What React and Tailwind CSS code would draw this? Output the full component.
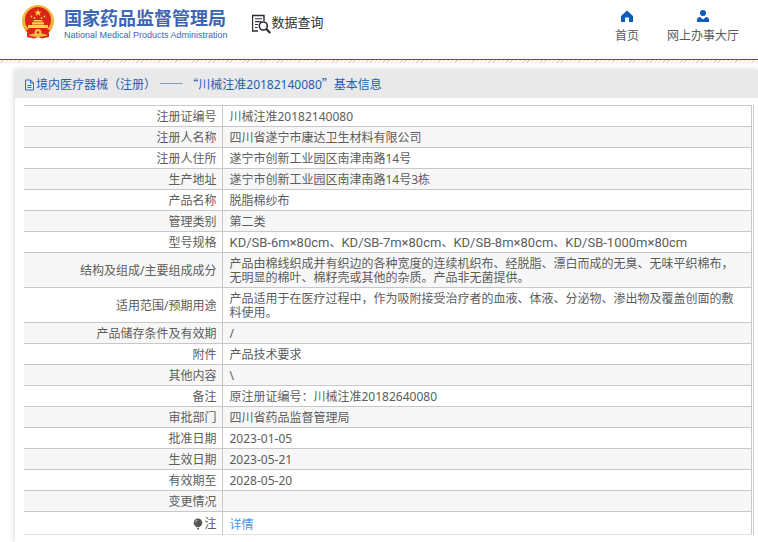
const rows = [
    { label: '注册证编号', value: '川械注准20182140080' },
    { label: '注册人名称', value: '四川省遂宁市康达卫生材料有限公司' },
    { label: '注册人住所', value: '遂宁市创新工业园区南津南路14号' },
    { label: '生产地址', value: '遂宁市创新工业园区南津南路14号3栋' },
    { label: '产品名称', value: '脱脂棉纱布' },
    { label: '管理类别', value: '第二类' },
    { label: '型号规格', value: <ModelList models={['KD/SB-6m×80cm', 'KD/SB-7m×80cm', 'KD/SB-8m×80cm', 'KD/SB-1000m×80cm']} /> },
    {
        label: '结构及组成/主要组成成分',
        value: '产品由棉线织成并有织边的各种宽度的连续机织布、经脱脂、漂白而成的无臭、无味平织棉布，无明显的棉叶、棉籽壳或其他的杂质。产品非无菌提供。'
    },
    {
        label: '适用范围/预期用途',
        value: '产品适用于在医疗过程中，作为吸附接受治疗者的血液、体液、分泌物、渗出物及覆盖创面的敷料使用。'
    },
    { label: '产品储存条件及有效期', value: '/' },
    { label: '附件', value: '产品技术要求' },
    { label: '其他内容', value: '\\' },
    { label: '备注', value: '原注册证编号：川械注准20182640080' },
    { label: '审批部门', value: '四川省药品监督管理局' },
    { label: '批准日期', value: '2023-01-05' },
    { label: '生效日期', value: '2023-05-21' },
    { label: '有效期至', value: '2028-05-20' },
    { label: '变更情况', value: '' }
];

export default function App() {
    return (
        <div lang="zh-CN" className="min-h-screen bg-white font-['Noto_Sans','Noto_Sans_CJK_SC',sans-serif] text-xs text-[#5c5c5c]">
            <Header />
            <main className="mt-[7px] ml-[15px] shadow-[0_0_6px_rgba(0,0,0,0.2)]">
                <h1 className="flex h-7 items-center gap-px bg-[#e9e9e9] pt-px pl-[9px] text-xs text-[#1c5fb4]">
                    <DocumentIcon />
                    <span>
                        境内医疗器械（注册） <Cjk>——</Cjk> <Cjk>“</Cjk>川械注准20182140080<Cjk>”</Cjk>基本信息
                    </span>
                </h1>
                <div className="pt-[7px] pr-1 pb-2 pl-[9px]">
                    <div className="border-r border-[#ccccd4] pr-px">
                        <DetailTable />
                    </div>
                </div>
            </main>
        </div>
    );
}

function Header() {
    return (
        <header>
            <div className="flex h-[60px] items-start border-b border-[#1f5fa8] pr-[19px] pl-[21px]">
                <a href="#" className="flex items-start gap-[9px] pt-1">
                    <Emblem />
                    <span className="flex flex-col pt-0.5 font-['Noto_Sans_CJK_SC',sans-serif] text-lg leading-[22px] font-bold whitespace-nowrap text-[#3c66b4]">
                        国家药品监督管理局
                        <span className="font-['Liberation_Sans',sans-serif] text-[9px] leading-[14px] font-normal">
                            National Medical Products Administration
                        </span>
                    </span>
                </a>
                <a href="#" className="ml-6 flex items-center pt-2.5 text-[13px] leading-6 whitespace-nowrap text-[#333]">
                    <SearchDocIcon />
                    数据查询
                </a>
                <nav className="ml-auto flex gap-7 pt-2.5 whitespace-nowrap">
                    <a href="#" className="flex flex-col items-center gap-1.5">
                        <HomeIcon />
                        <span>首页</span>
                    </a>
                    <a href="#" className="flex flex-col items-center gap-1.5">
                        <PersonIcon />
                        <span>网上办事大厅</span>
                    </a>
                </nav>
            </div>
            <div className="h-[3px] bg-[repeating-linear-gradient(135deg,#fff_0px,#fff_2px,#d5dbe2_2px,#d5dbe2_3px)]" />
        </header>
    );
}

function DetailTable() {
    return (
        <table className="w-full table-fixed border-collapse border-t border-r border-[#c8c8cc] leading-[14px]">
            <colgroup>
                <col className="w-[198px]" />
                <col />
            </colgroup>
            <tbody>
                {rows.map(({ label, value }) => (
                    <tr key={label} className="h-[21px] border-b border-[#c8c8cc] even:bg-[#f7f7f7]">
                        <th scope="row" className="border-r border-[#c8c8cc] pt-1 pr-[5px] pb-0.5 text-right font-normal">
                            {label}
                        </th>
                        <td className="pt-1 pr-2 pb-0.5 pl-[7px]">{value}</td>
                    </tr>
                ))}
                <tr className="h-[23px] border-b border-[#e4e4e4]">
                    <th scope="row" className="border-r border-[#c8c8cc] pt-0.5 pr-[5px] font-normal">
                        <span className="flex items-center justify-end gap-px">
                            <BulbIcon />注
                        </span>
                    </th>
                    <td className="pt-1 pr-2 pl-[7px]">
                        <a href="#" className="text-[#4a94e6]">详情</a>
                    </td>
                </tr>
            </tbody>
        </table>
    );
}

function ModelList({ models }) {
    return models.map((model, i) => (
        <span key={model}>
            {i > 0 && '、'}
            <span className="font-['Roboto',sans-serif] text-[13px] leading-[14px]">{model}</span>
        </span>
    ));
}

// Full-width punctuation has to come from the Chinese font
function Cjk({ children }) {
    return <span className="font-['Noto_Sans_CJK_SC',sans-serif]">{children}</span>;
}

function Emblem() {
    return (
        <svg viewBox="0 0 34 36" className="h-9 w-[34px] shrink-0" aria-hidden="true">
            <path d="M6 25 L6 33 L13 34.5 L17 33 L21 34.5 L28 33 L28 25 Z" fill="#d9251c" />
            <circle cx="17" cy="17" r="16" fill="#efb63c" />
            <circle cx="17" cy="16" r="13" fill="#dc2318" />
            <path d="M17 5.2l1 2.5h2.7l-2.2 1.6.9 2.6-2.4-1.6-2.4 1.6.9-2.6-2.2-1.6H16z" fill="#ffd84a" />
            <g fill="#ffd84a">
                <circle cx="10.5" cy="12.5" r="0.9" />
                <circle cx="13.5" cy="14" r="0.9" />
                <circle cx="20.5" cy="14" r="0.9" />
                <circle cx="23.5" cy="12.5" r="0.9" />
                <path d="M12 17.5l1-1.5h8l1 1.5zM11 18.2h12v2.3H11zM7 21h20v3H7z" />
            </g>
            <path d="M5 26Q17 22 29 26L26 31Q17 27 8 31Z" fill="#dc2318" />
            <circle cx="17" cy="28.5" r="3.4" fill="#f5c445" />
            <circle cx="17" cy="28.5" r="1.3" fill="#dc2318" />
            <path d="M8 31Q13 33 17 31Q21 33 26 31" fill="none" stroke="#f0b93c" strokeWidth="1.2" />
        </svg>
    );
}

function SearchDocIcon() {
    return (
        <svg viewBox="1 0 20 20" className="mt-1 h-5 w-5 shrink-0" fill="none" stroke="#2b2b33" aria-hidden="true">
            <path d="M7 17H1.5V1.5H13V7" strokeWidth="1.4" />
            <path d="M4 4.7h7M4 7.6h6M4 10.5h3M4 13.5h2.5" strokeWidth="1.1" />
            <circle cx="12.3" cy="12" r="4" strokeWidth="1.6" />
            <path d="M15.3 15l3.9 4" strokeWidth="2.2" />
        </svg>
    );
}

function HomeIcon() {
    return (
        <svg viewBox="0 0 12 12" className="size-3" fill="#0b5cbf" aria-hidden="true">
            <path d="M6 .5 12 6V12H8V7.5H4V12H0V6Z" />
        </svg>
    );
}

function PersonIcon() {
    return (
        <svg viewBox="0 0 12 12" className="size-3" fill="#0b5cbf" aria-hidden="true">
            <circle cx="6" cy="3" r="3" />
            <path d="M0 12V10Q0 7.3 3 7L6 9.4 9 7Q12 7.3 12 10V12Z" />
        </svg>
    );
}

function DocumentIcon() {
    return (
        <svg viewBox="0 0 11 12" className="h-3 w-[11px] shrink-0" fill="none" stroke="currentColor" aria-hidden="true">
            <path d="M1.5 1h5l3 3v7h-8zM6.5 1v3h3M3.5 6.5h4M3.5 8.5h4" strokeWidth="0.9" />
        </svg>
    );
}

function BulbIcon() {
    return (
        <svg viewBox="0 0 10 12" className="h-3 w-2.5" aria-hidden="true">
            <path d="M5 .5a4.3 4.3 0 0 1 4.3 4.3C9.3 7 7.5 8.2 6.5 9H3.5C2.5 8.2.7 7 .7 4.8A4.3 4.3 0 0 1 5 .5zM3.7 9.8h2.6L5.5 11.5h-1z" fill="#555" />
            <path d="M2.5 4.5a2.2 2.2 0 0 1 2.2-2.2" fill="none" stroke="#ddd" strokeWidth="0.8" />
        </svg>
    );
}
